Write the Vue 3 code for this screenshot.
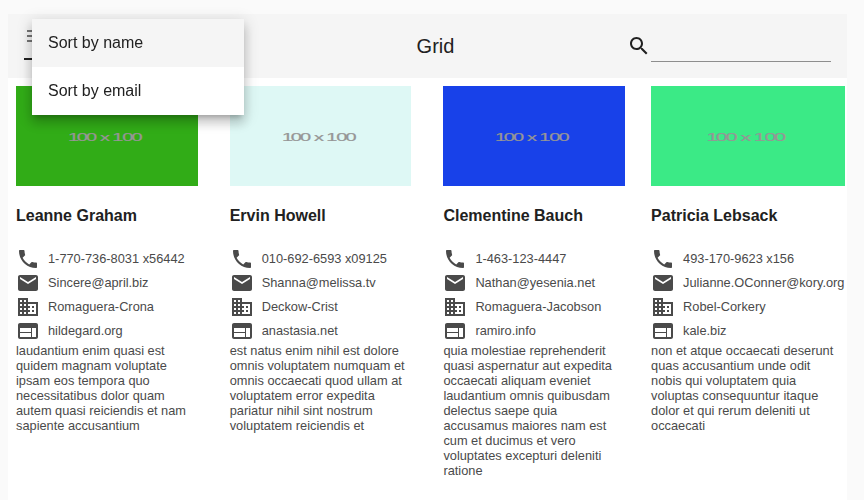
<script setup>
import { ref } from 'vue'

const query = ref('')
const options = ['Sort by name', 'Sort by email']
const icons = [
  'M6.62 10.79c1.44 2.83 3.76 5.14 6.59 6.59l2.2-2.2c.27-.27.67-.36 1.02-.24 1.12.37 2.33.57 3.57.57.55 0 1 .45 1 1V20c0 .55-.45 1-1 1-9.39 0-17-7.61-17-17 0-.55.45-1 1-1h3.5c.55 0 1 .45 1 1 0 1.25.2 2.45.57 3.57.11.35.03.74-.25 1.02l-2.2 2.2z',
  'M20 4H4c-1.1 0-1.99.9-1.99 2L2 18c0 1.1.9 2 2 2h16c1.1 0 2-.9 2-2V6c0-1.1-.9-2-2-2zm0 4l-8 5-8-5V6l8 5 8-5v2z',
  'M12 7V3H2v18h20V7H12zM6 19H4v-2h2v2zm0-4H4v-2h2v2zm0-4H4V9h2v2zm0-4H4V5h2v2zm4 12H8v-2h2v2zm0-4H8v-2h2v2zm0-4H8V9h2v2zm0-4H8V5h2v2zm10 12h-8v-2h2v-2h-2v-2h2v-2h-2V9h8v10zm-2-8h-2v2h2v-2zm0 4h-2v2h2v-2z',
  'M20 4H4c-1.1 0-1.99.9-1.99 2L2 18c0 1.1.9 2 2 2h16c1.1 0 2-.9 2-2V6c0-1.1-.9-2-2-2zm-5 14H4v-4h11v4zm0-5H4V9h11v4zm5 5h-4V9h4v9z',
]
const users = [
  {
    name: 'Leanne Graham', tone: 'green',
    details: ['1-770-736-8031 x56442', 'Sincere@april.biz', 'Romaguera-Crona', 'hildegard.org'],
    text: 'laudantium enim quasi est quidem magnam voluptate ipsam eos tempora quo necessitatibus dolor quam autem quasi reiciendis et nam sapiente accusantium',
  },
  {
    name: 'Ervin Howell', tone: 'ice',
    details: ['010-692-6593 x09125', 'Shanna@melissa.tv', 'Deckow-Crist', 'anastasia.net'],
    text: 'est natus enim nihil est dolore omnis voluptatem numquam et omnis occaecati quod ullam at voluptatem error expedita pariatur nihil sint nostrum voluptatem reiciendis et',
  },
  {
    name: 'Clementine Bauch', tone: 'blue',
    details: ['1-463-123-4447', 'Nathan@yesenia.net', 'Romaguera-Jacobson', 'ramiro.info'],
    text: 'quia molestiae reprehenderit quasi aspernatur aut expedita occaecati aliquam eveniet laudantium omnis quibusdam delectus saepe quia accusamus maiores nam est cum et ducimus et vero voluptates excepturi deleniti ratione',
  },
  {
    name: 'Patricia Lebsack', tone: 'mint',
    details: ['493-170-9623 x156', 'Julianne.OConner@kory.org', 'Robel-Corkery', 'kale.biz'],
    text: 'non et atque occaecati deserunt quas accusantium unde odit nobis qui voluptatem quia voluptas consequuntur itaque dolor et qui rerum deleniti ut occaecati',
  },
]
</script>

<template>
  <div class="page">
    <main class="panel">
      <header class="toolbar">
        <div class="sort">
          <svg class="sort-icon" viewBox="0 0 24 24"><path d="M3 6h18v2H3zM3 11h18v2H3zM3 16h18v2H3z" /></svg>
        </div>
        <h1>Grid</h1>
        <label class="search">
          <svg viewBox="0 0 24 24"><path d="M15.5 14h-.79l-.28-.27C15.41 12.59 16 11.11 16 9.5 16 5.91 13.09 3 9.5 3S3 5.91 3 9.5 5.91 16 9.5 16c1.61 0 3.09-.59 4.23-1.57l.27.28v.79l5 4.99L20.49 19l-4.99-5zm-6 0C7.01 14 5 11.99 5 9.5S7.01 5 9.5 5 14 7.01 14 9.5 11.99 14 9.5 14z" /></svg>
          <input v-model="query" type="text" />
        </label>
      </header>
      <section class="cards">
        <article v-for="user in users" :key="user.name">
          <svg class="picture" :class="user.tone" viewBox="0 0 100 100" preserveAspectRatio="none">
            <text x="28.6 33.4 38.5 44 46.2 51 53 58.5 63.6" y="55">100 x 100</text>
          </svg>
          <h2>{{ user.name }}</h2>
          <ul>
            <li v-for="(detail, i) in user.details" :key="i">
              <svg viewBox="0 0 24 24"><path :d="icons[i]" /></svg>
              <span>{{ detail }}</span>
            </li>
          </ul>
          <p>{{ user.text }}</p>
        </article>
      </section>
    </main>
    <div class="menu">
      <div v-for="(option, i) in options" :key="option" class="option" :class="{ active: i === 0 }">{{ option }}</div>
    </div>
  </div>
</template>

<style>
body {
  background: #fafafa;
}
</style>

<style scoped>
.page {
  position: relative;
  box-sizing: border-box;
  width: 864px;
  height: 500px;
  padding: 14px 17px 0 8px;
  overflow: hidden;
  background: #fafafa;
  font-family: "Liberation Sans", Arial, sans-serif;
  color: #212121;
}
.panel {
  height: 486px;
  background: #fff;
}
.toolbar {
  display: grid;
  grid-template-columns: 1fr auto 1fr;
  align-items: center;
  box-sizing: border-box;
  height: 64px;
  padding: 0 16px;
  background: #f5f5f5;
}
.toolbar h1 {
  margin: 0;
  padding-left: 16px;
  font-size: 20px;
  font-weight: 400;
  line-height: 24px;
}
.sort {
  box-sizing: border-box;
  align-self: start;
  width: 180px;
  height: 46px;
  padding-top: 10px;
  border-bottom: 2px solid #212121;
}
.sort-icon {
  display: block;
  width: 24px;
  height: 24px;
  fill: #757575;
}
.search {
  display: flex;
  justify-content: flex-end;
  align-items: center;
}
.search svg {
  width: 24px;
  height: 24px;
  fill: #212121;
}
.search input {
  box-sizing: border-box;
  width: 180px;
  height: 32px;
  padding: 0;
  border: 0;
  border-bottom: 1px solid #8e8e8e;
  border-radius: 0;
  outline: 0;
  background: transparent;
  font: inherit;
}
.cards {
  display: grid;
  grid-template-columns: 213.7px 213.7px 207.7px 194px;
  padding: 8px 0 0 8px;
}
article {
  padding-right: 32px;
}
article:nth-child(3) {
  padding-right: 26px;
}
article:nth-child(4) {
  padding-right: 0;
}
.picture {
  display: block;
  width: 100%;
  height: 100px;
}
.picture text {
  fill: #969696;
  stroke: #969696;
  stroke-width: 0.2;
  font-size: 11px;
}
.green {
  background: #31ac17;
}
.ice {
  background: #def8f5;
}
.blue {
  background: #1841e9;
}
.mint {
  background: #3bea86;
}
h2 {
  margin: 20px 0 21px;
  font-size: 16px;
  font-weight: 700;
  line-height: 20px;
}
ul {
  margin: 0;
  padding: 0;
  list-style: none;
}
li {
  display: flex;
  align-items: center;
  gap: 8px;
  height: 24px;
  font-size: 12.8px;
  line-height: 15px;
  color: #4a4a4a;
  white-space: nowrap;
}
li svg {
  flex: none;
  width: 24px;
  height: 24px;
  fill: #4a4a4a;
}
li span {
  padding-bottom: 2px;
}
p {
  max-width: 188px;
  margin: 0;
  font-size: 12.8px;
  line-height: 15px;
  color: #4a4a4a;
}
.menu {
  position: absolute;
  top: 19px;
  left: 32px;
  width: 212px;
  background: #fff;
  box-shadow: 0 5px 5px -3px rgba(0, 0, 0, 0.2), 0 8px 10px 1px rgba(0, 0, 0, 0.14), 0 3px 14px 2px rgba(0, 0, 0, 0.12);
  will-change: transform;
}
.option {
  height: 48px;
  padding: 0 16px;
  font-size: 16px;
  line-height: 48px;
}
.active {
  background: #f5f5f5;
}
</style>
